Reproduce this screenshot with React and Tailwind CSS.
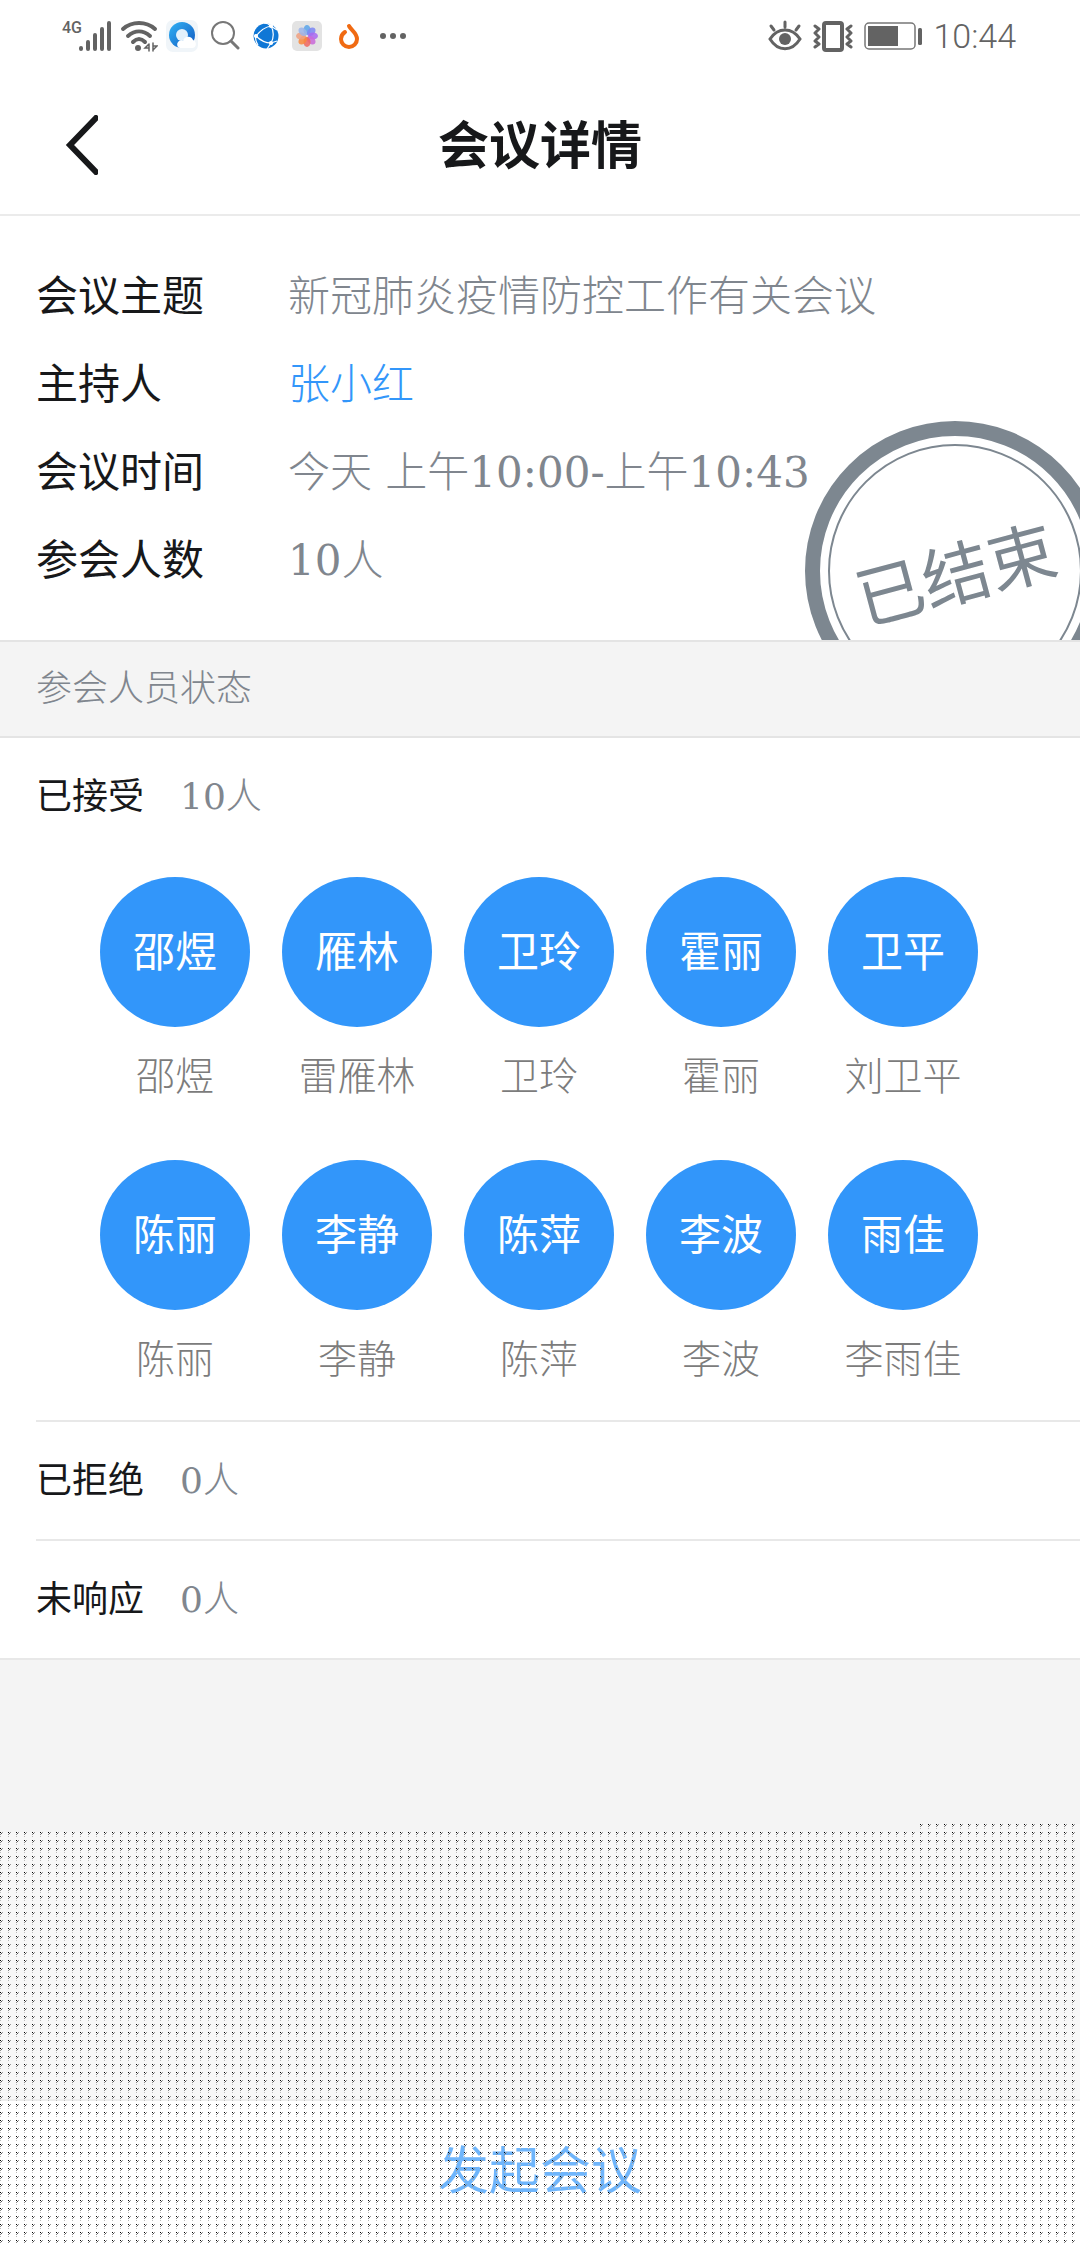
const sans = "font-['Roboto','Noto_Sans_CJK_SC',sans-serif]";

const details = [
  { label: '会议主题', value: '新冠肺炎疫情防控工作有关会议' },
  { label: '主持人', value: '张小红', link: true },
  { label: '会议时间', value: '今天 上午10:00-上午10:43' },
  { label: '参会人数', value: '10人' },
];

const accepted = [
  ['邵煜', '邵煜'],
  ['雁林', '雷雁林'],
  ['卫玲', '卫玲'],
  ['霍丽', '霍丽'],
  ['卫平', '刘卫平'],
  ['陈丽', '陈丽'],
  ['李静', '李静'],
  ['陈萍', '陈萍'],
  ['李波', '李波'],
  ['雨佳', '李雨佳'],
];

function Signal() {
  return (
    <div className="flex">
      <span className="w-4 text-base leading-4 font-medium font-['Roboto',sans-serif]">4G</span>
      <svg width="34" height="32" viewBox="0 0 34 32" stroke="#636363" strokeWidth="4" strokeLinecap="round">
        <path d="M3 28v1M10 22v7M17 15v14M24 9v20M31 3v26" />
      </svg>
    </div>
  );
}

function Wifi() {
  return (
    <svg width="38" height="32" viewBox="0 0 38 32" fill="none" stroke="#636363" strokeWidth="4" strokeLinecap="round">
      <path d="M3 9C12 1 26 1 35 9M8 16c7-6 15-6 22 0M13 22c4-4 8-4 12 0" />
      <circle cx="18" cy="28" r="3" fill="#636363" stroke="none" />
      <path d="M29 24v7M29 24l-4 4h4M33 31v-8M33 30l4-4h-4" strokeWidth="1.5" />
    </svg>
  );
}

function BrowserIcon() {
  return (
    <svg width="32" height="32" viewBox="0 0 32 32">
      <defs>
        <linearGradient id="browser-ring" x1="0" y1="0" x2="1" y2="1">
          <stop offset="0" stopColor="#2fb2f5" />
          <stop offset="1" stopColor="#1258c0" />
        </linearGradient>
      </defs>
      <rect width="32" height="32" rx="7" fill="#f0f5f9" />
      <circle cx="16" cy="15" r="13" fill="url(#browser-ring)" />
      <circle cx="16" cy="15" r="6" fill="#e4f1fb" />
      <path d="M14 28c-3 0-4-5-1-7 1-1 3-1 4 0 1-5 8-6 10-1 4 1 4 8-1 8z" fill="#fff" />
    </svg>
  );
}

function SearchIcon() {
  return (
    <svg width="30" height="30" viewBox="0 0 30 30" fill="none" stroke="#777" strokeLinecap="round">
      <circle cx="13" cy="12" r="11" strokeWidth="2" />
      <path d="M21 20l7 7" strokeWidth="3" />
    </svg>
  );
}

function GlobeIcon() {
  return (
    <svg width="28" height="28" viewBox="0 0 28 28" fill="none" stroke="#fff" strokeWidth="1.2">
      <circle cx="14" cy="14" r="12.5" fill="#0f77d6" stroke="none" />
      <path d="M4 14C8 9 13 5 19 4M4 14c4 4 9 7 15 7M19 4c3 5 3 12 0 17M4 14c-1 3 0 6 2 9M12 1c3 0 5 1 7 3l6 4M19 21l6-2M19 21l-4 6" />
      <circle cx="4" cy="14" r="1.5" fill="#fff" />
      <circle cx="19" cy="4" r="1.5" fill="#fff" />
      <circle cx="19" cy="21" r="1.5" fill="#fff" />
    </svg>
  );
}

function PhotosIcon() {
  const petals = ['#5aa4ea', '#7b86f5', '#a967f0', '#c969d8', '#f0685f', '#f98a3c', '#f0a080', '#9bb4ea'];
  return (
    <svg width="30" height="30" viewBox="0 0 30 30">
      <rect width="30" height="30" rx="5" fill="#e3e3e3" />
      {petals.map((color, i) => (
        <ellipse key={color} cx="15" cy="9" rx="3.5" ry="5" fill={color} opacity="0.85" transform={`rotate(${i * 45} 15 15)`} />
      ))}
    </svg>
  );
}

function FlameIcon() {
  return (
    <svg width="22" height="26" viewBox="0 0 22 26" fill="none" stroke="#f06a12" strokeWidth="4" strokeLinecap="round" strokeLinejoin="round">
      <path d="M11 3c2 4 8 7 8 13a8 8 0 0 1-16 0c0-3 1-5 4-7" />
    </svg>
  );
}

function EyeIcon() {
  return (
    <svg width="34" height="32" viewBox="0 0 34 32" fill="none" stroke="#636363" strokeWidth="3" strokeLinecap="round">
      <path d="M2 19c8-12 22-12 30 0-8 13-22 13-30 0zM17 7V2M6 10L3 6M28 10l3-4" />
      <circle cx="17" cy="19" r="6" fill="#636363" stroke="none" />
    </svg>
  );
}

function VibrateIcon() {
  return (
    <svg width="40" height="32" viewBox="0 0 40 32" fill="none" stroke="#636363" strokeLinejoin="round" strokeLinecap="round">
      <rect x="11" y="3" width="18" height="27" rx="2" strokeWidth="4" />
      <path d="M2 6l4 3-4 4 4 4-4 4 4 3-4 3M38 6l-4 3 4 4-4 4 4 4-4 3 4 3" strokeWidth="3" />
    </svg>
  );
}

function BatteryIcon() {
  return (
    <svg width="58" height="28" viewBox="0 0 58 28">
      <rect x="1" y="1" width="50" height="26" rx="4" fill="none" stroke="#777" strokeWidth="1.5" />
      <rect x="4" y="4" width="30" height="20" fill="#636363" />
      <rect x="54" y="6" width="4" height="17" rx="1.5" fill="#636363" />
    </svg>
  );
}

function StatusBar() {
  return (
    <div className="flex h-[76px] items-center justify-between pr-16 pb-1 pl-[62px] text-[#636363]">
      <div className="flex items-center gap-2">
        <Signal />
        <Wifi />
        <BrowserIcon />
        <span className="px-1"><SearchIcon /></span>
        <GlobeIcon />
        <span className="px-1"><PhotosIcon /></span>
        <span className="px-1"><FlameIcon /></span>
        <span className="flex gap-1 pl-2">
          <i className="size-[6px] rounded-full bg-[#636363]" />
          <i className="size-[6px] rounded-full bg-[#636363]" />
          <i className="size-[6px] rounded-full bg-[#636363]" />
        </span>
      </div>
      <div className="flex items-center gap-[11px]">
        <EyeIcon />
        <VibrateIcon />
        <BatteryIcon />
        <span className="font-['Roboto',sans-serif] text-[34px] leading-10">10:44</span>
      </div>
    </div>
  );
}

function Group({ title, count, children }) {
  return (
    <section className="ml-9 border-b-2 border-[#e8e8e8] last:ml-0 last:pl-9">
      <h2 className="flex h-[117px] items-center gap-9 text-4xl">
        <span className="font-normal">{title}</span>
        <span className="text-[#80868e]">{count}</span>
      </h2>
      {children}
    </section>
  );
}

const dots =
  "bg-white/30 bg-[conic-gradient(from_270deg_at_1px_1px,#000_90deg,transparent_0deg),conic-gradient(from_270deg_at_1px_1px,#555_90deg,transparent_0deg),conic-gradient(from_270deg_at_1px_1px,#999_90deg,transparent_0deg),conic-gradient(from_270deg_at_1px_1px,#888_90deg,transparent_0deg),conic-gradient(from_270deg_at_1px_1px,#bbb_90deg,transparent_0deg)] bg-[size:8px_8px] bg-[position:0_0,1px_1px,2px_0,0_2px,0_4px]";

function DotTexture() {
  return (
    <div aria-hidden="true" className="pointer-events-none absolute inset-x-0 bottom-0 flex flex-col items-end">
      <div className={`h-2 w-40 ${dots}`} />
      <div className={`h-[412px] w-full ${dots}`} />
    </div>
  );
}

export default function App() {
  return (
    <div className="relative flex min-h-screen flex-col bg-[#f4f4f4] font-['DejaVu_Serif','Noto_Sans_CJK_SC',serif] font-light text-[#17181a]">
      <div className="bg-white">
        <StatusBar />
        <header className={`grid h-[140px] grid-cols-[1fr_auto_1fr] items-center border-b-2 border-[#ebebeb] px-16 ${sans}`}>
          <button type="button" aria-label="返回" className="justify-self-start">
            <svg width="34" height="60" viewBox="0 0 34 60" fill="none" stroke="#17181a" strokeWidth="6">
              <path d="M34 1L6 30l28 29" />
            </svg>
          </button>
          <h1 className="pt-1 text-[51px] leading-[60px] font-bold">会议详情</h1>
        </header>
      </div>

      <section className="relative bg-white py-9">
        <dl>
          {details.map(({ label, value, link }) => (
            <div key={label} className="flex h-22 items-center pl-9 text-[42px]">
              <dt className="w-[252px] shrink-0 font-normal">{label}</dt>
              <dd className="text-[#80868e]">
                {link ? <a href="#host" className="text-[#3296fa]">{value}</a> : value}
              </dd>
            </div>
          ))}
        </dl>
        <div className="absolute inset-0 overflow-hidden">
          <div className="absolute top-[205px] -right-[25px] size-[300px] rounded-full border-[15px] border-[#7d8790]">
            <div className="absolute inset-2 rounded-full border-2 border-[#7d8790]" />
          </div>
        </div>
        <div className="pointer-events-none absolute top-[205px] right-0 flex h-[300px] w-[250px] items-center justify-center">
          <span className="-rotate-15 font-['Noto_Sans_CJK_SC',sans-serif] text-[68px] leading-none font-normal text-[#7d8790]">已结束</span>
        </div>
      </section>

      <h2 className="flex h-[98px] items-center border-y-2 border-[#e4e4e4] pl-9 text-4xl text-[#80868e]">参会人员状态</h2>

      <main className="bg-white">
        <Group title="已接受" count="10人">
          <ul className="mr-9 grid grid-cols-5 gap-y-[51px] pt-[22px] pr-[50px] pb-7 pl-12">
            {accepted.map(([short, name]) => (
              <li key={name} className="flex flex-col items-center gap-[18px]">
                <span className="flex size-[150px] items-center justify-center rounded-full bg-[#3296fa] text-[42px] font-normal text-white">{short}</span>
                <span className="text-[39px] leading-[64px] text-[#7c7c7c]">{name}</span>
              </li>
            ))}
          </ul>
        </Group>
        <Group title="已拒绝" count="0人" />
        <Group title="未响应" count="0人" />
      </main>

      <footer className="mt-auto border-t-2 border-[#e4e4e4] bg-white">
        <button type="button" className="h-[143px] w-full text-[51px] font-normal text-[#3296fa]">发起会议</button>
      </footer>

      <DotTexture />
    </div>
  );
}
